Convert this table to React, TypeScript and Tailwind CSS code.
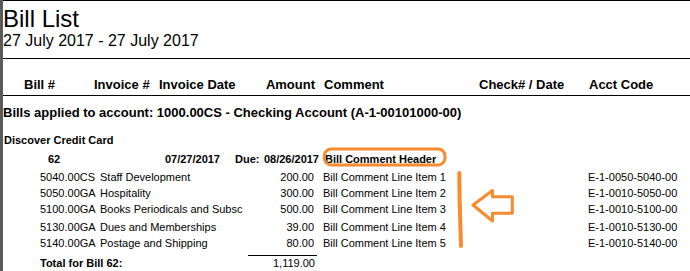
import React from "react";

const items = [
  { code: "5040.00CS", desc: "Staff Development", amt: "200.00", c: "Bill Comment Line Item 1", acct: "E-1-0050-5040-00", extra: "" },
  { code: "5050.00GA", desc: "Hospitality", amt: "300.00", c: "Bill Comment Line Item 2", acct: "E-1-0010-5050-00", extra: "" },
  { code: "5100.00GA", desc: "Books Periodicals and Subsc", amt: "500.00", c: "Bill Comment Line Item 3", acct: "E-1-0010-5100-00", extra: "" },
  { code: "5130.00GA", desc: "Dues and Memberships", amt: "39.00", c: "Bill Comment Line Item 4", acct: "E-1-0010-5130-00", extra: "mt-[2px]" },
  { code: "5140.00GA", desc: "Postage and Shipping", amt: "80.00", c: "Bill Comment Line Item 5", acct: "E-1-0010-5140-00", extra: "" },
];

export default function App() {
  return (
    <div className="relative w-[690px] h-[271px] overflow-hidden bg-white flex text-black font-['Liberation_Sans',Arial,sans-serif]">
      <div className="w-[3px] shrink-0 bg-[#5a5a5a]" />
      <div className="flex-1 border-t border-black flex flex-col">
        <div className="pt-[5px] text-[24px] leading-[25px] whitespace-nowrap">Bill List</div>
        <div className="text-[16px] leading-[20px] whitespace-nowrap">27 July 2017 - 27 July 2017</div>
        <div className="mt-[7px] border-t border-b border-black pt-[18px] pb-[2px] flex text-[13px] leading-[16px] font-bold pl-[21px] whitespace-nowrap">
          <div className="w-[70px] shrink-0">Bill #</div>
          <div className="w-[65px] shrink-0">Invoice #</div>
          <div className="w-[91px] shrink-0">Invoice Date</div>
          <div className="w-[65px] shrink-0 text-right">Amount</div>
          <div className="ml-[9px] w-[155px] shrink-0">Comment</div>
          <div className="w-[110px] shrink-0">Check# / Date</div>
          <div>Acct Code</div>
        </div>
        <div className="pt-[8px] text-[13px] leading-[17px] font-bold whitespace-nowrap">
          Bills applied to account: 1000.00CS - Checking Account (A-1-00101000-00)
        </div>
        <div className="mt-[12px] pl-[1px] text-[11px] leading-[14px] font-bold whitespace-nowrap">Discover Credit Card</div>
        <div className="mt-[5px] flex pl-[45px] text-[11px] leading-[14px] font-bold whitespace-nowrap">
          <div className="w-[112px] shrink-0">62</div>
          <div className="w-[60px] shrink-0 text-right">07/27/2017</div>
          <div className="w-[99px] shrink-0 flex justify-between pl-[15px]">
            <span>Due:</span>
            <span>08/26/2017</span>
          </div>
          <div className="ml-[6px]">Bill Comment Header</div>
        </div>
        <div className="mt-[3px] flex flex-col text-[11px] leading-[16px] whitespace-nowrap">
          {items.map((it) => (
            <div key={it.code} className={`flex pl-[37px] ${it.extra}`}>
              <div className="w-[60px] shrink-0">{it.code}</div>
              <div className="w-[143px] shrink-0">{it.desc}</div>
              <div className="w-[71px] shrink-0 text-right">{it.amt}</div>
              <div className="ml-[9px] w-[265px] shrink-0">{it.c}</div>
              <div>{it.acct}</div>
            </div>
          ))}
        </div>
        <div className="mt-[4px] flex pl-[37px] text-[11px] leading-[14px] whitespace-nowrap">
          <div className="w-[208px] shrink-0 font-bold border-t border-transparent">Total for Bill 62:</div>
          <div className="w-[69px] shrink-0 text-right pr-[2px] border-t border-black">1,119.00</div>
        </div>
      </div>
      <svg className="absolute inset-0 pointer-events-none" width="690" height="271" viewBox="0 0 690 271">
        <rect x="324.3" y="149" width="120.7" height="16" rx="7" fill="none" stroke="#fa8a2e" strokeWidth="3" />
        <path d="M459.3 173 L459.6 200 L460.4 226 L461 246" fill="none" stroke="#fa8a2e" strokeWidth="4" strokeLinecap="round" />
        <path d="M473 205 L492.5 190.5 L492.5 196.8 L512.3 196.8 L512.3 213.3 L492.5 213.3 L492.5 221 Z" fill="none" stroke="#fa8a2e" strokeWidth="3" strokeLinejoin="round" />
      </svg>
    </div>
  );
}
